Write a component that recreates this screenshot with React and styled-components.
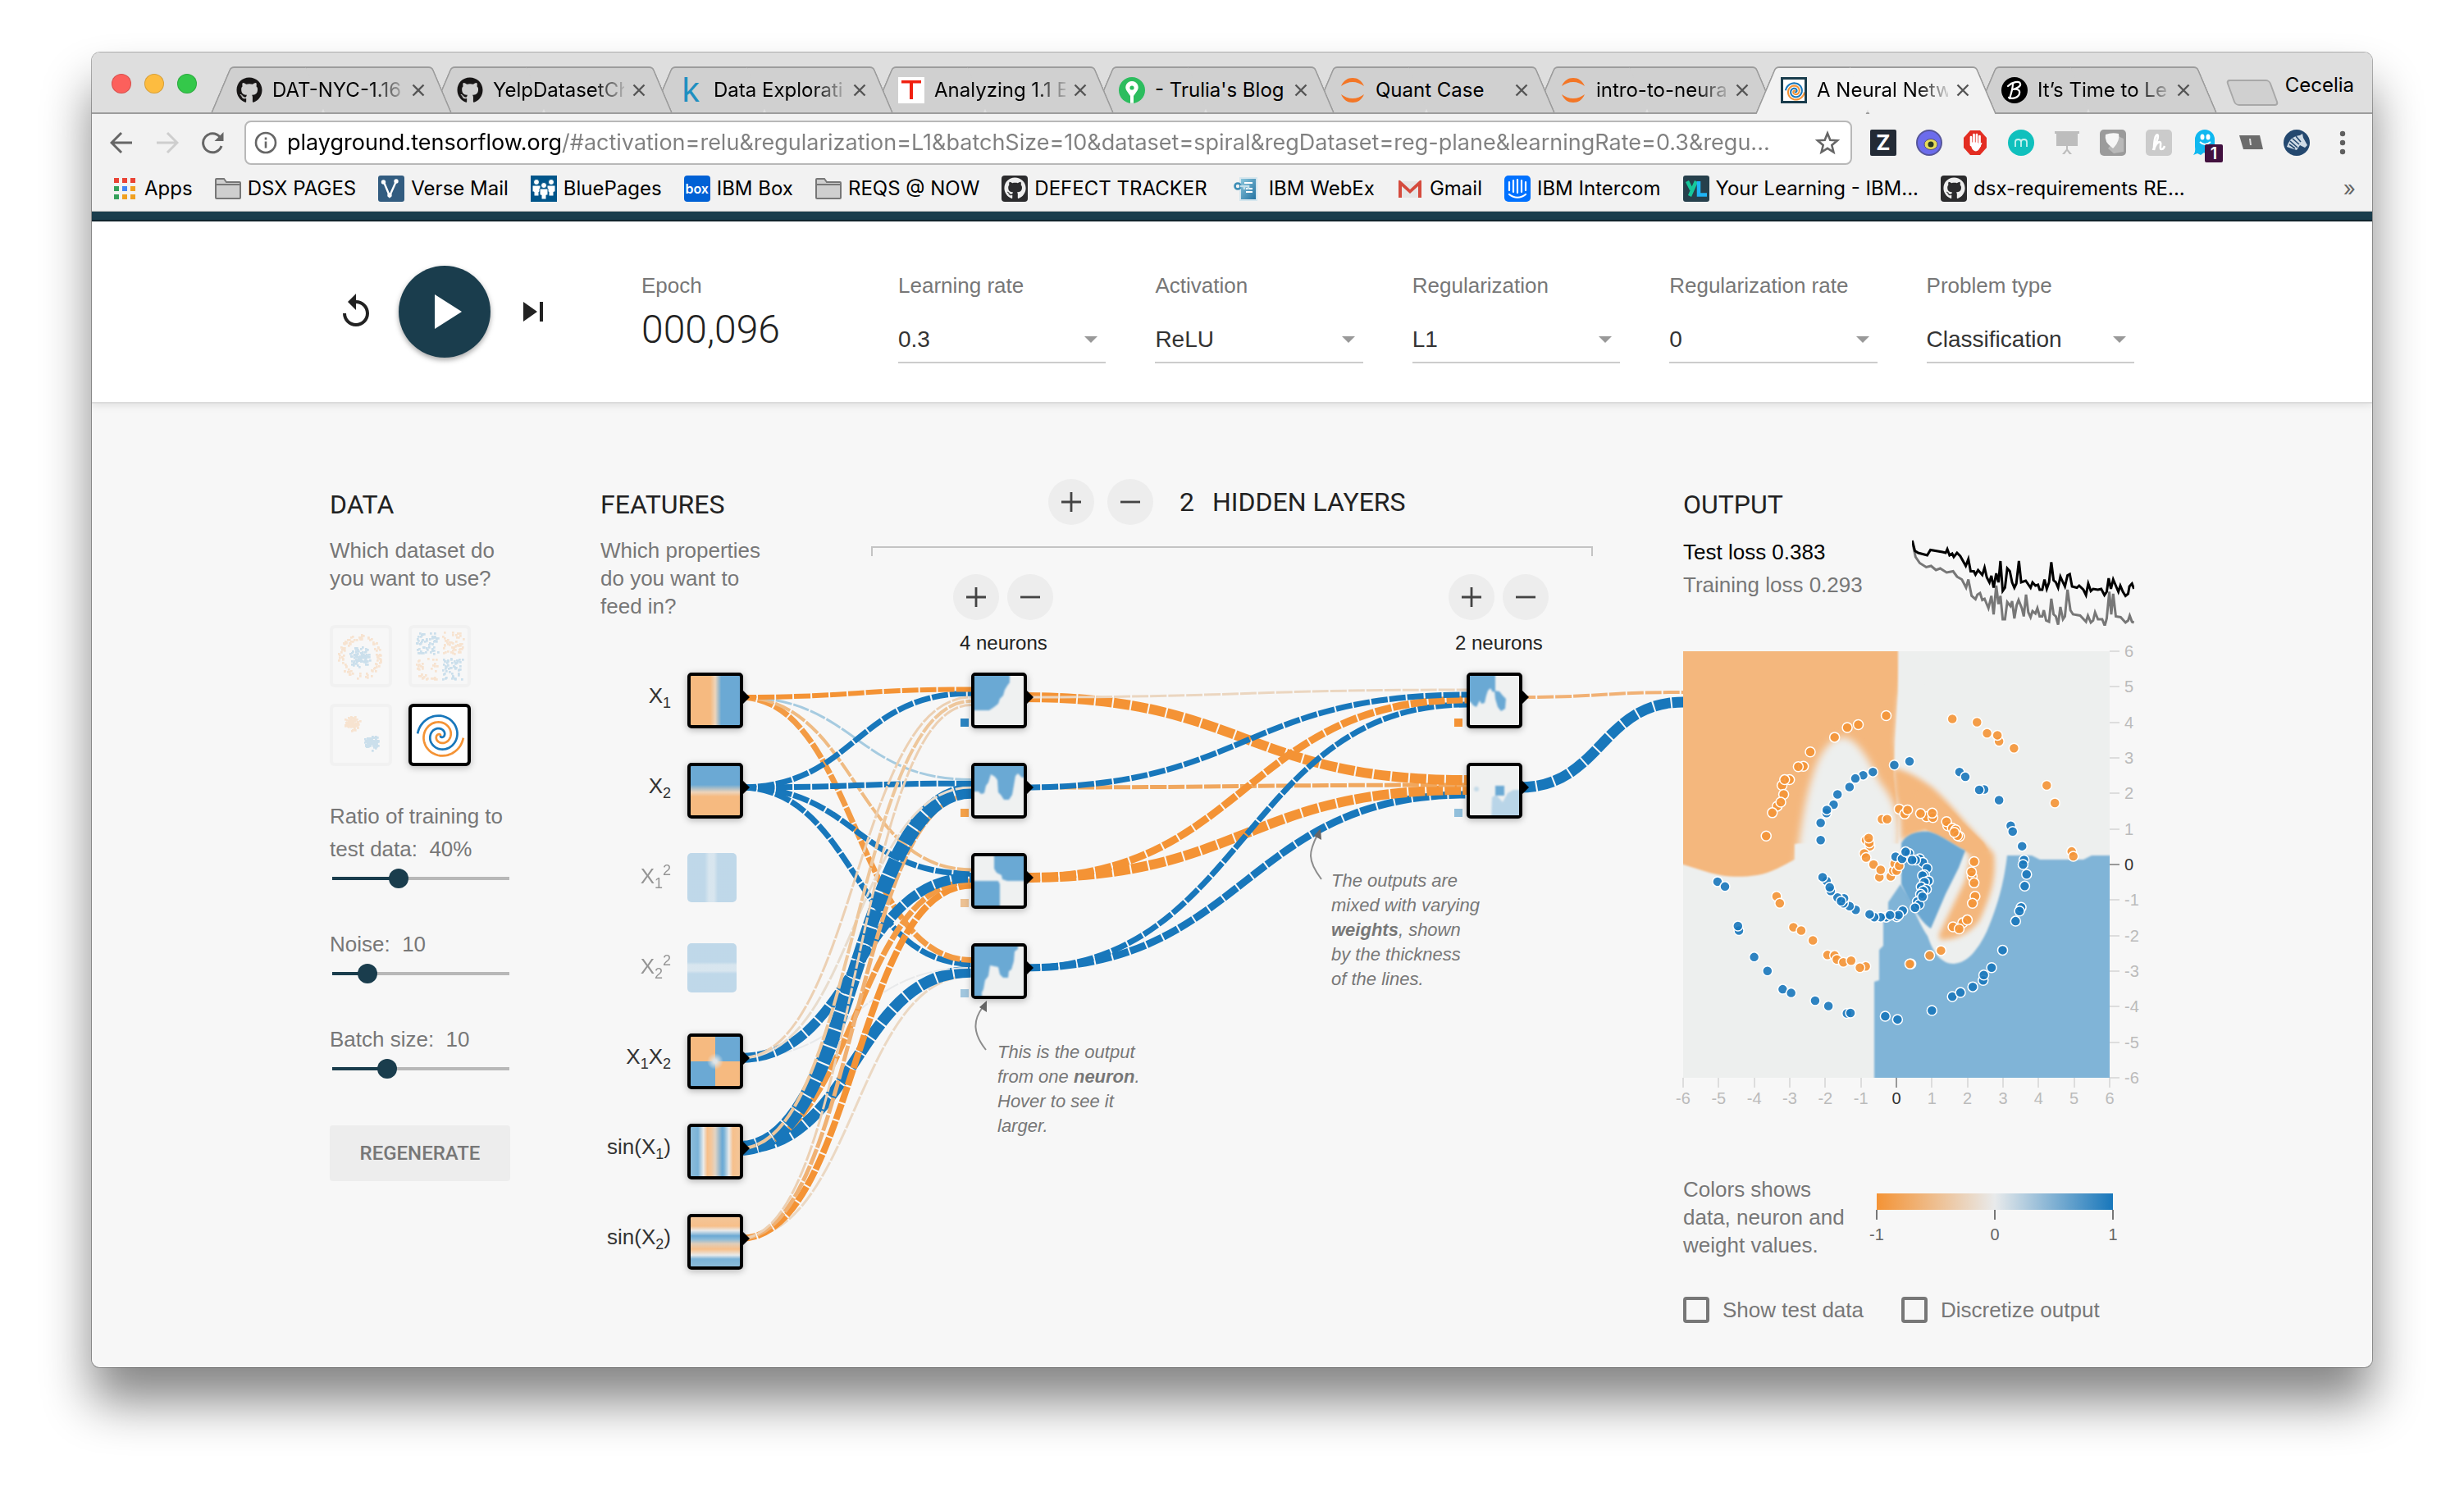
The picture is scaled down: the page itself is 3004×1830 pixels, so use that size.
import React from "react";
import styled, { createGlobalStyle, css } from "styled-components";
import { FaGithub } from "react-icons/fa";

const UI = `Inter, "Liberation Sans", sans-serif`;
const BODY = `"Liberation Sans", Arial, sans-serif`;
const HEAD = `Roboto, "Liberation Sans", sans-serif`;
const ORANGE = "#f49335";
const BLUE = "#1877bb";
const NAVY = "#1a3d4d";

const Global = createGlobalStyle`
  * { box-sizing: border-box; }
  body { margin: 0; background: #fff; font-family: ${BODY}; color: #222; }
  button, input, select { font: inherit; color: inherit; margin: 0; }
  button { border: 0; padding: 0; background: none; cursor: pointer; }
  h1, h2, p, ul { margin: 0; padding: 0; font-weight: 400; }
  svg { display: block; flex: none; }
`;

/* ---------- window ---------- */

const Desk = styled.div`
  padding: 64px 112px 160px;
`;
const Window = styled.div`
  border-radius: 10px;
  overflow: hidden;
  background: #f7f7f7;
`;
const Shade = styled.div`
  border-radius: 10px;
  box-shadow: 0 0 0 1px rgba(0, 0, 0, 0.3), 0 42px 60px rgba(0, 0, 0, 0.48);
`;

/* ---------- tab strip ---------- */

const TabStrip = styled.div`
  display: flex;
  align-items: flex-end;
  height: 75px;
  padding-left: 24px;
  background: #dedede;
  border-bottom: 2px solid #9c9c9c;
  font: 24px/32px ${UI};
  color: #000;
`;
const Lights = styled.div`
  display: flex;
  gap: 16px;
  padding-bottom: 23px;
  margin-right: 17px;
`;
const Light = styled.button`
  width: 24px;
  height: 24px;
  border-radius: 50%;
  background: ${(p) => p.$c};
  box-shadow: inset 0 0 0 1px rgba(0, 0, 0, 0.15);
`;
const slope = css`
  content: "";
  position: absolute;
  z-index: -1;
  top: 0;
  bottom: ${(p) => (p.$active ? "-2px" : "0")};
  background: ${(p) => (p.$active ? "#f2f2f2" : "#d0d0d0")};
  border-top: 2px solid #9c9c9c;
`;
const Tab = styled.div`
  position: relative;
  z-index: ${(p) => p.$z};
  isolation: isolate;
  display: flex;
  align-items: center;
  width: 294px;
  height: 56px;
  margin-right: -25px;
  padding: 2px 33px 0 31px;
  gap: 10px;
  &::before {
    ${slope}
    left: 12px;
    right: 50%;
    border-left: 2px solid #9c9c9c;
    border-top-left-radius: 5px;
    transform: skewX(-23deg);
  }
  &::after {
    ${slope}
    left: calc(50% - 20px);
    right: 12px;
    border-right: 2px solid #9c9c9c;
    border-top-right-radius: 5px;
    transform: skewX(23deg);
  }
`;
const TabTitle = styled.span`
  flex: 1;
  min-width: 0;
  padding-left: 2px;
  white-space: nowrap;
  ${(p) => p.$fade && "mask-image: linear-gradient(90deg, #000 76%, transparent 104%);"}
`;
const NewTab = styled.button`
  width: 54px;
  height: 32px;
  margin: 0 0 8px 41px;
  background: #d0d0d0;
  border: 2px solid #a8a8a8;
  border-radius: 5px;
  transform: skewX(20deg);
`;
const Profile = styled.button`
  margin: 0 22px 17px auto;
`;

/* ---------- toolbar ---------- */

const Toolbar = styled.div`
  display: flex;
  align-items: center;
  height: 70px;
  padding: 0 20px 0 18px;
  background: #f2f2f2;
`;
const NavButton = styled.button`
  display: grid;
  place-items: center;
  width: 36px;
  height: 36px;
  margin-right: 20px;
  opacity: ${(p) => (p.disabled ? 0.25 : 1)};
`;
const UrlBox = styled.label`
  flex: 1;
  display: flex;
  align-items: center;
  height: 54px;
  padding: 0 12px 0 10px;
  gap: 12px;
  border: 2px solid #b8b8b8;
  border-radius: 8px;
  background: #fff;
`;
const UrlInput = styled.input`
  flex: 1;
  min-width: 0;
  border: 0;
  padding: 0;
  outline: 0;
  font: 27px/40px ${UI};
  color: transparent;
  background: linear-gradient(90deg, #000 336px, #808080 336px);
  background-clip: text;
  -webkit-background-clip: text;
`;
const Extensions = styled.div`
  display: flex;
  gap: 24px;
  margin-left: 22px;
`;
const ExtButton = styled.button`
  position: relative;
  width: 32px;
  height: 32px;
`;
const Badge = styled.span`
  position: absolute;
  left: 16px;
  top: 18px;
  width: 22px;
  height: 22px;
  background: #42113f;
  color: #fff;
  font: 600 20px/22px ${UI};
  border-radius: 2px;
`;
const IconTile = styled.span`
  display: grid;
  place-items: center;
  flex: none;
  width: ${(p) => p.$size || 32}px;
  height: ${(p) => p.$size || 32}px;
  overflow: hidden;
  border-radius: ${(p) => p.$r || 0}px;
  background: ${(p) => p.$bg || "none"};
  color: ${(p) => p.$fg || "#fff"};
  font: ${(p) => p.$font || `700 26px/32px ${UI}`};
`;
const Bookmarks = styled.nav`
  display: flex;
  align-items: center;
  height: 49px;
  padding: 0 20px 7px 24px;
  gap: 27px;
  background: #f2f2f2;
  border-bottom: 1px solid #c4c4c4;
`;
const Bookmark = styled.a`
  display: flex;
  align-items: center;
  gap: 8px;
  color: #000;
  font: 24px/32px ${UI};
  text-decoration: none;
  white-space: nowrap;
`;
const More = styled.button`
  margin-left: auto;
  font: 26px/32px ${UI};
  color: #666;
`;

/* ---------- page header ---------- */

const Accent = styled.div`
  height: 12px;
  background: ${NAVY};
  border-bottom: 2px solid #12262f;
`;
const Controls = styled.header`
  background: #fff;
  border-bottom: 2px solid #dcdcdc;
  box-shadow: 0 2px 10px rgba(0, 0, 0, 0.1);
`;
const ControlsInner = styled.div`
  display: flex;
  align-items: center;
  max-width: 2200px;
  height: 220px;
  margin: 0 auto;
`;
const Playback = styled.div`
  display: flex;
  align-items: center;
  width: 380px;
  padding-left: 8px;
`;
const RoundButton = styled.button`
  display: grid;
  place-items: center;
  width: 48px;
  height: 48px;
`;
const PlayButton = styled(RoundButton)`
  width: 112px;
  height: 112px;
  margin: 0 28px;
  border-radius: 50%;
  background: ${NAVY};
  box-shadow: 0 3px 6px rgba(0, 0, 0, 0.35);
`;
const Fields = styled.div`
  flex: 1;
  display: grid;
  grid-template-columns: 253px repeat(5, 1fr);
  column-gap: 60px;
  height: 112px;
  margin-top: 14px;
`;
const Field = styled.label`
  display: flex;
  flex-direction: column;
  justify-content: space-between;
  font-size: 26px;
  line-height: 34px;
  color: #777;
`;
const Epoch = styled.output`
  height: 74px;
  font: 300 48px/66px ${HEAD};
  color: #222;
`;
const SelectWrap = styled.span`
  display: flex;
  align-items: center;
  border-bottom: 2px solid #ccc;
  padding-right: 10px;
  height: 56px;
`;
const Select = styled.select`
  flex: 1;
  min-width: 0;
  appearance: none;
  border: 0;
  padding: 0;
  background: none;
  font: 28px/36px ${BODY};
  color: #333;
`;

/* ---------- main ---------- */

const Main = styled.main`
  display: grid;
  grid-template-columns: 220px minmax(0, 1fr) 550px;
  max-width: 2200px;
  margin: 0 auto;
  padding: 92px 0 54px;
`;
const Title = styled.h2`
  padding-top: 11px;
  font: 400 32px/40px ${HEAD};
  color: #222;
`;
const Blurb = styled.p`
  font-size: 26px;
  line-height: 34px;
  color: #777;
`;
const DataColumn = styled.section`
  display: flex;
  flex-direction: column;
  ${Blurb} { margin-top: 19px; }
`;
const Datasets = styled.div`
  display: grid;
  grid-template-columns: 76px 76px;
  gap: 20px;
  margin: 40px 0 41px;
`;
const DatasetButton = styled.button`
  height: 76px;
  border: 4px solid ${(p) => (p.$on ? "#000" : "#f1f1f1")};
  border-radius: 6px;
  background: ${(p) => (p.$on ? "#fff" : "#f7f7f7")};
  box-shadow: ${(p) => (p.$on ? "0 2px 8px rgba(0,0,0,.25)" : "none")};
`;
const SliderField = styled.label`
  display: block;
  margin-bottom: 48px;
  font-size: 26px;
  line-height: 40px;
  color: #777;
  white-space: pre-wrap;
`;
const Slider = styled.input`
  display: block;
  appearance: none;
  width: 240px;
  height: 24px;
  margin: 4px 0 0 -9px;
  background:
    linear-gradient(90deg, ${NAVY} ${(p) => p.$fill}%, #b8b8b8 ${(p) => p.$fill}%)
    center / 216px 4px no-repeat;
  &::-webkit-slider-thumb {
    appearance: none;
    width: 24px;
    height: 24px;
    border-radius: 50%;
    background: ${NAVY};
  }
`;
const Regenerate = styled.button`
  height: 68px;
  margin-top: 9px;
  border-radius: 4px;
  background: #ededed;
  font: 500 24px/68px ${HEAD};
  color: #777;
`;

const NetworkColumn = styled.section`
  padding-left: 110px;
`;
const NetworkHead = styled.div`
  display: grid;
  grid-template-columns: 220px minmax(0, 880px);
  column-gap: 110px;
  height: 236px;
  ${Blurb} { margin-top: 19px; }
`;
const LayersTitle = styled.div`
  display: flex;
  align-items: center;
  gap: 16px;
  padding-left: 216px;
  font: 32px/40px ${HEAD};
`;
const LayerCount = styled.span`
  margin: 0 6px 0 16px;
`;
const CircleButton = styled.button`
  display: grid;
  place-items: center;
  width: 56px;
  height: 56px;
  border-radius: 50%;
  background: #ededed;
`;
const Bracket = styled.div`
  height: 12px;
  margin: 26px 0 22px;
  border: 2px solid #c4c4c4;
  border-bottom: 0;
`;
const LayerControls = styled.div`
  display: flex;
  justify-content: space-between;
  padding: 0 54px 0 100px;
`;
const LayerControl = styled.div`
  display: grid;
  grid-template-columns: 56px 56px;
  gap: 14px 10px;
  font-size: 24px;
  line-height: 28px;
`;
const NeuronCount = styled.span`
  grid-column: 1 / 3;
  padding-left: 8px;
`;
const Diagram = styled.div`
  position: relative;
  height: 770px;
`;
const Links = styled.svg`
  position: absolute;
  left: 0;
  top: 0;
  overflow: visible;
`;
const Node = styled.button`
  position: absolute;
  left: ${(p) => p.$x}px;
  top: ${(p) => p.$y}px;
  width: ${(p) => (p.$off ? 60 : 68)}px;
  height: ${(p) => (p.$off ? 60 : 68)}px;
  border: ${(p) => (p.$off ? "0" : "4px solid #000")};
  border-radius: 5px;
  overflow: hidden;
  box-shadow: ${(p) => (p.$off ? "none" : "0 2px 8px rgba(0,0,0,.28)")};
  opacity: ${(p) => (p.$off ? 0.4 : 1)};
  background: ${(p) => p.$bg || "#eff1f1"};
`;
const FeatureLabel = styled.span`
  position: absolute;
  left: 0;
  top: ${(p) => p.$y}px;
  width: 86px;
  text-align: right;
  font-size: 26px;
  line-height: 56px;
  color: #333;
  opacity: ${(p) => (p.$off ? 0.5 : 1)};
  sub, sup { font-size: 18px; line-height: 0; }
`;
const Callout = styled.p`
  position: absolute;
  left: ${(p) => p.$x}px;
  top: ${(p) => p.$y}px;
  font-size: 22px;
  line-height: 30px;
  font-style: italic;
  color: #777;
  white-space: nowrap;
`;

const OutputColumn = styled.section`
  display: flex;
  flex-direction: column;
`;
const LossRow = styled.div`
  display: flex;
  justify-content: space-between;
  align-items: flex-start;
  height: 141px;
  margin-top: 18px;
  font-size: 26px;
  line-height: 40px;
`;
const Loss = styled.p`
  color: ${(p) => (p.$dim ? "#777" : "#000")};
`;
const Plot = styled.div`
  display: grid;
  grid-template-columns: 520px 1fr;
  grid-template-rows: 520px 40px;
  font-size: 20px;
  line-height: 20px;
  color: #bbb;
`;
const AxisRight = styled.div`
  display: flex;
  flex-direction: column;
  justify-content: space-between;
  margin: -10px 0;
`;
const AxisBottom = styled.div`
  display: flex;
  justify-content: space-between;
  margin: 0 -20px;
`;
const Tick = styled.span`
  display: flex;
  align-items: center;
  gap: 6px;
  ${(p) => p.$v && "flex-direction: column; width: 40px; gap: 3px;"}
  color: ${(p) => (p.$zero ? "#333" : "inherit")};
  &::before {
    content: "";
    width: ${(p) => (p.$v ? 2 : 12)}px;
    height: ${(p) => (p.$v ? 12 : 2)}px;
    background: ${(p) => (p.$zero ? "#999" : "#ddd")};
  }
`;
const Legend = styled.div`
  display: flex;
  gap: 20px;
  margin-top: 79px;
`;
const LegendText = styled(Blurb)`
  width: 216px;
`;
const Scale = styled.div`
  width: 288px;
  padding-top: 22px;
  font-size: 20px;
  line-height: 20px;
  color: #666;
`;
const ScaleBar = styled.div`
  height: 20px;
  background: linear-gradient(90deg, ${ORANGE}, #e8eaeb, ${BLUE});
`;
const ScaleTicks = styled(AxisBottom)`
  span::before { background: #777; }
  span { gap: 8px; }
`;
const Checks = styled.div`
  display: flex;
  gap: 46px;
  margin-top: 46px;
`;
const Check = styled.label`
  display: flex;
  align-items: center;
  gap: 16px;
  font-size: 26px;
  line-height: 32px;
  color: #777;
`;
const Box = styled.input`
  appearance: none;
  width: 32px;
  height: 32px;
  border: 4px solid #777;
  border-radius: 4px;
`;

/* ---------- small drawings ---------- */

const CloseIcon = () => (
  <svg width="16" height="16" viewBox="0 0 16 16" stroke="#555" strokeWidth="2.4">
    <path d="M1.5 1.5l13 13M14.5 1.5l-13 13" />
  </svg>
);
const Jupyter = () => (
  <svg width="32" height="32" viewBox="0 0 32 32" fill="#f37626">
    <path d="M2 11C5 4 10 1 16 1s11 3 14 10C26 8 21 6 16 6S6 8 2 11z" />
    <path d="M2 21c3 7 8 10 14 10s11-3 14-10c-4 3-9 5-14 5S6 24 2 21z" />
  </svg>
);
const Trulia = () => (
  <svg width="32" height="32" viewBox="0 0 32 32">
    <circle cx="16" cy="16" r="16" fill="#2cbd5e" />
    <path d="M16 5a7.500 7.500 0 0 0-6.500 11.500L14 23v8.800h4V23l4.500-6.500A7.500 7.500 0 0 0 16 5z" fill="#fff" />
    <circle cx="16" cy="13" r="2.600" fill="#2cbd5e" />
  </svg>
);
const TIcon = () => (
  <svg width="32" height="32" viewBox="0 0 32 32">
    <rect width="32" height="32" fill="#fff" />
    <path d="M4 4h24v3.500H18V27h-4V7.500H4z" fill="#f02010" />
  </svg>
);
const Bee = () => (
  <svg width="32" height="32" viewBox="0 0 32 32">
    <circle cx="16" cy="16" r="16" fill="#000" />
    <g fill="none" stroke="#fff" strokeWidth="2.200" strokeLinecap="round">
      <path d="M14 8c0 6-2 12-4 18" />
      <path d="M8 11c5-5 14-7 15-3 1 3-4 6-9 7 6-1 9 1 8 5-1 5-8 7-13 5" />
    </g>
  </svg>
);
const spiral = (turn) => {
  let d = "";
  for (let i = 0; i <= 90; i++) {
    const t = i / 90;
    const r = 28 * (1 - t);
    const a = Math.PI * (turn + 1.03 + 3.56 * t);
    d += `${i ? "L" : "M"}${(35 + r * Math.cos(a)).toFixed(1)} ${(35 + r * Math.sin(a)).toFixed(1)}`;
  }
  return d;
};
const SpiralArt = ({ size, w }) => (
  <svg width={size} height={size} viewBox="0 0 68 68" fill="none" strokeWidth={w}>
    <path d={spiral(0)} stroke={BLUE} />
    <path d={spiral(1)} stroke={ORANGE} />
  </svg>
);
const FolderIcon = () => (
  <svg width="32" height="32" viewBox="0 0 32 32" stroke="#777" strokeWidth="2">
    <path d="M1 5q0-1 1-1h9l3 4h16q1 0 1 1v18q0 1-1 1H2q-1 0-1-1z" fill="#cfcfcf" />
    <path d="M1 11h30" />
  </svg>
);
const AppsIcon = () => {
  const c = ["#ea4335", "#ea4335", "#ea4335", "#34a05a", "#4285f4", "#f0a020", "#34a05a", "#f0a020", "#f0a020"];
  return (
    <svg width="32" height="32" viewBox="0 0 32 32">
      {c.map((f, i) => (
        <rect key={i} x={3 + (i % 3) * 10} y={3 + Math.floor(i / 3) * 10} width="6" height="6" fill={f} />
      ))}
    </svg>
  );
};
const VerseIcon = () => (
  <svg width="32" height="32" viewBox="0 0 32 32">
    <rect width="32" height="32" rx="3" fill="#325c80" />
    <g stroke="#fff" strokeWidth="2.400" fill="#fff">
      <path d="M7 8l7 17L22 7" fill="none" />
      <circle cx="6.500" cy="8" r="1.500" /><circle cx="14" cy="24" r="1.500" /><circle cx="22" cy="7" r="1.500" />
    </g>
  </svg>
);
const PeopleIcon = () => (
  <svg width="32" height="32" viewBox="0 0 32 32" fill="#fff">
    <rect width="32" height="32" fill="#00558a" />
    {[7, 25, 16].map((x, i) => (
      <g key={x} transform={`translate(${x} ${i === 2 ? 4 : 0})`} stroke="#00558a" strokeWidth="1">
        <circle cx="0" cy="8" r="3.500" />
        <path d="M-5 12h10v8h-2v5h-6v-5h-2z" />
      </g>
    ))}
  </svg>
);
const WebexIcon = () => (
  <svg width="40" height="32" viewBox="0 0 40 32">
    <defs>
      <linearGradient id="webex" x1="0" y1="0" x2="1" y2="1">
        <stop offset="0" stopColor="#8ec9de" />
        <stop offset="1" stopColor="#1f6f9f" />
      </linearGradient>
    </defs>
    <rect x="13" y="3" width="20" height="27" fill="url(#webex)" stroke="#d5e6ee" strokeWidth="2" />
    <path d="M18 9h10M20 16h8M20 20h8" stroke="#fff" strokeWidth="2.200" />
    <circle cx="10" cy="13" r="3.500" fill="none" stroke="#3c8db5" strokeWidth="2.600" />
    <path d="M13 13h10v4M18 13v4" fill="none" stroke="#c3dfea" strokeWidth="2.600" />
  </svg>
);
const GmailIcon = () => (
  <svg width="32" height="32" viewBox="-1 0 32 32">
    <path d="M2 7h26v20H2z" fill="#e6e6e6" />
    <path d="M1 27V7q0-2 2-1l12 11L27 6q2-1 2 1v20h-4V13L15 22 5 13v14z" fill="#d54b3d" />
  </svg>
);
const IntercomIcon = () => (
  <svg width="32" height="32" viewBox="0 0 32 32" stroke="#fff" strokeWidth="2.200" strokeLinecap="round" fill="none">
    <rect width="32" height="32" rx="5" fill="#0071ff" stroke="none" />
    <path d="M6 8v10M11 6v14M16 5v16M21 6v14M26 8v10M6 23c6 5 14 5 20 0" />
  </svg>
);
const YLIcon = () => (
  <svg width="32" height="32" viewBox="0 0 32 32" fill="none" strokeWidth="4.500">
    <rect width="32" height="32" rx="3" fill="#26404c" />
    <path d="M5 7l5 10M16 7L8 25" stroke="#16c79a" />
    <path d="M19 7v16.500h10" stroke="#1fb4f5" />
  </svg>
);
const GithubTile = () => (
  <IconTile $bg="#2b2b2d" $r={4} $fg="#eee">
    <FaGithub size={27} />
  </IconTile>
);
const ArrowIcon = ({ flip }) => (
  <svg width="28" height="28" viewBox="0 0 28 28" fill="none" stroke="#666" strokeWidth="3">
    <path d={flip ? "M1 14h25M14 2l12 12-12 12" : "M27 14H2M14 2L2 14l12 12"} />
  </svg>
);
const ReloadIcon = () => (
  <svg width="30" height="30" viewBox="0 0 30 30">
    <path d="M25 19a11.500 11.500 0 1 1-2-11" fill="none" stroke="#666" strokeWidth="3" />
    <path d="M27.500 2v11h-11z" fill="#666" />
  </svg>
);
const InfoIcon = () => (
  <svg width="28" height="28" viewBox="0 0 28 28" stroke="#666" strokeWidth="2.600" fill="none">
    <circle cx="14" cy="14" r="12" />
    <path d="M14 12.500v8M14 7.500v3" />
  </svg>
);
const StarIcon = () => (
  <svg width="32" height="32" viewBox="0 0 32 32" stroke="#666" strokeWidth="2.600" fill="none">
    <path d="M16 4.500l3.300 8.200 8.700.6-6.700 5.700 2.100 8.500L16 22.900l-7.400 4.600 2.100-8.500L4 13.300l8.700-.6z" />
  </svg>
);
const EyeIcon = () => (
  <svg width="32" height="32" viewBox="0 0 32 32">
    <circle cx="16" cy="16" r="15" fill="#6c6cec" stroke="#56569a" strokeWidth="2" />
    <ellipse cx="18" cy="18" rx="8" ry="6.500" fill="#e6dc5a" stroke="#54507c" />
    <circle cx="18" cy="18" r="3.500" fill="#2b3a20" />
  </svg>
);
const StopIcon = () => (
  <svg width="32" height="32" viewBox="0 0 32 32">
    <path d="M10 1h12l8 9v12l-8 9H10l-8-9V10z" fill="#e32d22" />
    <g stroke="#fff" strokeWidth="2.700" strokeLinecap="round">
      <path d="M11 9v10M14.500 6v11M18 6v11M21.500 8v12" />
      <path d="M11 17q1 9 6 9 3 0 5-5l2-5-3 3-2-3h-8z" fill="#fff" strokeWidth="1" />
    </g>
  </svg>
);
const MIcon = () => (
  <svg width="32" height="32" viewBox="0 0 32 32">
    <circle cx="16" cy="16" r="16" fill="#10c0bd" />
    <path d="M9 21v-6q0-3 3.500-3t3.500 3v6m0-6q0-3 3.500-3t3.500 3v6" fill="none" stroke="#c8f2f0" strokeWidth="1.800" />
  </svg>
);
const BoardIcon = () => (
  <svg width="32" height="32" viewBox="0 0 32 32" fill="#bdbdbd">
    <path d="M1 2h30v3h-2v15H17v4l5 6h-3l-3-4-3 4h-3l5-6v-4H3V5H1z" />
  </svg>
);
const ShieldIcon = () => (
  <svg width="32" height="32" viewBox="0 0 32 32">
    <rect width="32" height="32" rx="5" fill="#9b9b9b" />
    <path d="M22 8l7 3v16l-12 2-7-6z" fill="#b9b9b9" />
    <path d="M7 6q8-3 16-1 2 8-6 17-1 1-2 0Q5 15 7 6z" fill="#f6f6f6" />
  </svg>
);
const HoneyIcon = () => (
  <svg width="32" height="32" viewBox="0 0 32 32">
    <rect width="32" height="32" rx="5" fill="#cbcbcb" />
    <path d="M9 25C11 18 17 10 14.500 6.500c-3-1-4.500 8-4.500 18.500 1-5 4-10 7-10s-1 9 2 9 3-2 4-4" fill="none" stroke="#fff" strokeWidth="2.600" />
  </svg>
);
const GhostIcon = () => (
  <svg width="32" height="32" viewBox="0 0 32 32">
    <path d="M4 12a12 12 0 0 1 24 0v18l-5-3-4 4-4-3-4 3-4-2-5 2q3-4 2-10z" fill="#10b8f0" />
    <g fill="#fff"><ellipse cx="13" cy="9" rx="2.500" ry="3.500" /><ellipse cx="20" cy="9" rx="2.500" ry="3.500" /></g>
    <path d="M10 15q6 6 13 0" fill="none" stroke="#fff" strokeWidth="2" />
  </svg>
);
const CardIcon = () => (
  <svg width="32" height="32" viewBox="0 0 32 32">
    <path d="M2 7h25l4 17H7z" fill="#6c6c6c" />
    <path d="M15 11l1 8" stroke="#ddd" strokeWidth="2" />
  </svg>
);
const ZebraIcon = () => (
  <svg width="32" height="32" viewBox="0 0 32 32">
    <circle cx="16" cy="16" r="16" fill="#24486f" />
    <path d="M4 21Q8 8 20 7l3-2 1 5 5 9-3 3-6-3-4 6z" fill="#cfdbe6" />
    <path d="M8 14l9 8M11 11l8 7M15 8l6 7M7 18l7 5" stroke="#24486f" strokeWidth="1.600" />
  </svg>
);
const DotsIcon = () => (
  <svg width="32" height="32" viewBox="-12 -1 32 32" fill="#5f5f5f">
    <circle cx="4" cy="4" r="3.200" /><circle cx="4" cy="15" r="3.200" /><circle cx="4" cy="26" r="3.200" />
  </svg>
);
const Material = ({ size, d, fill = "#222" }) => (
  <svg width={size} height={size} viewBox="0 0 24 24" fill={fill}>
    <path d={d} />
  </svg>
);
const PlusIcon = ({ minus }) => (
  <svg width="24" height="24" viewBox="0 0 24 24" stroke="#444" strokeWidth="2.800">
    <path d={minus ? "M0 12h24" : "M0 12h24M12 0v24"} />
  </svg>
);
const Caret = () => (
  <svg width="16" height="8" viewBox="0 0 16 8" fill="#999">
    <path d="M0 0h16L8 8z" />
  </svg>
);

/* ---------- dataset thumbnails ---------- */

const rng = (seed) => () => {
  seed = (seed * 16807) % 2147483647;
  return seed / 2147483647;
};
const scatter = (kind) => {
  const r = rng(kind.length * 971 + 13);
  const g = () => (r() + r() + r() - 1.5) / 1.5;
  const out = [];
  for (let i = 0; i < 200; i++) {
    const blue = i % 2 === 0;
    if (kind === "circle") {
      const a = r() * Math.PI * 2;
      const d = blue ? r() * 13 : 20 + r() * 7;
      out.push([32 + d * Math.cos(a), 34 + d * Math.sin(a), blue]);
    } else if (kind === "quadrants") {
      const x = r() < 0.5 ? 5 + r() * 26 : 37 + r() * 26;
      const y = r() < 0.5 ? 4 + r() * 26 : 36 + r() * 26;
      out.push([x, y, x < 34 === y < 34]);
    } else {
      const [cx, cy] = blue ? [46, 42] : [22, 19];
      out.push([cx + g() * 12, cy + g() * 11, blue]);
    }
  }
  return out;
};
const Scatter = ({ kind }) => (
  <svg width="68" height="68" viewBox="0 0 68 68">
    {scatter(kind).map(([x, y, b], i) => (
      <rect key={i} x={Math.round(x)} y={Math.round(y)} width="2.700" height="2.700" fill={b ? "#cbdfec" : "#f7e3d0"} />
    ))}
  </svg>
);

/* ---------- network ---------- */

const FO = "#f6ba80";
const FB = "#6ba9d4";
const FW = "#e9eaea";
const features = [
  { label: <>X<sub>1</sub></>, bg: `linear-gradient(90deg, ${FO} 40%, #edd4ba 50%, ${FB} 62%)` },
  { label: <>X<sub>2</sub></>, bg: `linear-gradient(180deg, ${FB} 38%, #edd4ba 53%, ${FO} 62%)` },
  { label: <>X<sub>1</sub><sup>2</sup></>, off: true, bg: `linear-gradient(90deg, ${FB} 35%, #a9cbe2 44%, #a9cbe2 54%, ${FB} 62%)` },
  { label: <>X<sub>2</sub><sup>2</sup></>, off: true, bg: `linear-gradient(180deg, ${FB} 38%, #a9cbe2 44%, #a9cbe2 56%, ${FB} 62%)` },
  {
    label: <>X<sub>1</sub>X<sub>2</sub></>,
    bg: `radial-gradient(circle at 50% 50%, #dfe3e4 2px, transparent 10px), conic-gradient(${FB} 89deg, ${FO} 91deg 179deg, ${FB} 181deg 269deg, ${FO} 271deg 359deg, ${FB})`,
  },
  { label: <>sin(X<sub>1</sub>)</>, bg: `linear-gradient(90deg, #8bbbd9, #7ab3d8 15%, ${FW} 26%, #f7bf8a 34%, #f3c79c 42%, #e0d3c4 50%, ${FB} 64%, #7ab3d8 68%, ${FW} 78%, #f6c08c 86%, #f3c699)` },
  { label: <>sin(X<sub>2</sub>)</>, bg: `linear-gradient(180deg, #f3c699, #f7bf8a 18%, ${FW} 27%, ${FB} 38%, #8bbbd9 45%, #e0cdb8 54%, #f7bf8a 65%, ${FW} 77%, #7ab3d8 85%, #8bbbd9)` },
];

const ROW = 110;
const hiddenArt = [
  ["M-5-5H43V8L40 12 37 17 35 24 31 28 29 34 24 38 18 42H-5z"],
  ["M-5-5H65V13L58 14 53 9 50 12 48 24 46 35 42 41 36 41 32 35 29 32 28 17 25 13 20 10 17 20 14 24 12 33 8 34 5 31-5 31z"],
  ["M24-5H65V30H40L34 28 33 23 27 20 24 15z", "M-5 30H29L31 34V65H-5z"],
  ["M-5-5H53V3L49 6 48 18 45 28 42 30 41 38 35 38 31 34 29 25 19 23 17 36 13 41 11 52 9 56 9 65H-5z"],
];
const outArt = [
  ["M-5-5H31V18L28 20 25 15 22 18 20 24 18 33 14 34 12 30 8 38 4 36 1 32-5 31z", "M30 18L36 19 40 24 44 28 43 40 38 43 34 38 31 28z"],
  [],
];

// source index, target index, colour, width
const layer1 = [
  [0, 0, ORANGE, 6], [1, 0, BLUE, 7], [4, 0, "#ecd0b3", 3], [5, 0, "#eec79c", 4], [6, 0, "#ecd0b3", 3],
  [0, 1, "#a6cbe0", 3], [1, 1, BLUE, 7], [4, 1, "#e8dccd", 3], [5, 1, BLUE, 18], [6, 1, "#f0b173", 5],
  [0, 2, "#efbb83", 4], [1, 2, BLUE, 7], [4, 2, BLUE, 12], [5, 2, "#f39b44", 7], [6, 2, ORANGE, 8],
  [0, 3, "#f39b44", 7], [1, 3, BLUE, 7], [4, 3, "#e8e9ea", 2], [5, 3, BLUE, 14], [6, 3, "#ebd8c3", 3],
];
const layer2 = [
  [0, 0, "#ebd6c0", 3], [1, 0, BLUE, 7], [2, 0, ORANGE, 9], [3, 0, BLUE, 7],
  [0, 1, ORANGE, 12], [1, 1, "#f0a75e", 5], [2, 1, ORANGE, 12], [3, 1, BLUE, 9],
];
const layer3 = [[0, 0, "#f1b175", 4], [1, 0, BLUE, 13]];

const wire = (sx, dx, list) => {
  const per = {};
  list.forEach((l) => (per[l[1]] = (per[l[1]] || 0) + 1));
  const seen = {};
  return list
    .map(([s, t, c, w]) => {
      const n = per[t];
      const i = (seen[t] = seen[t] === undefined ? 0 : seen[t] + 1);
      const y0 = 30 + s * ROW;
      const y1 = 30 + t * ROW + ((i - (n - 1) / 2) / n) * 24;
      const m = (sx + dx) / 2;
      return { d: `M${sx} ${y0}C${m} ${y0} ${m} ${y1} ${dx} ${y1}`, c, w };
    })
    .reverse();
};
const wires = [...wire(1120, 1320, layer3), ...wire(516, 1056, layer2), ...wire(170, 452, layer1)];
const tips = [
  ...[0, 1, 4, 5, 6].map((r) => [174, r]),
  ...[0, 1, 2, 3].map((r) => [520, r]),
  ...[0, 1].map((r) => [1124, r]),
];
const biases = [
  [439, 0, "#2a83c0"], [439, 1, "#f3a048"], [439, 2, "#ecc193"], [439, 3, "#a1c6de"],
  [1041, 0, ORANGE], [1041, 1, "#92bfdb"],
];

const NeuronArt = ({ shapes, faint }) => (
  <svg width="60" height="60" viewBox="0 0 60 60">
    <defs>
      <filter id="soft" x="-20%" y="-20%" width="140%" height="140%">
        <feGaussianBlur stdDeviation="1" />
      </filter>
    </defs>
    <g filter="url(#soft)" fill={FB}>
      {shapes.map((d) => <path key={d} d={d} />)}
      {faint && (
        <>
          <path d="M26 65L27 38 32 35 40 44 46 33 53 29H65V65z" fill="#b9d5e8" />
          <rect x="31" y="24" width="11" height="12" />
          <circle cx="8" cy="28" r="3" fill="#c4dae8" />
        </>
      )}
    </g>
  </svg>
);

const Network = () => (
  <Diagram>
    <Links width="1320" height="770" viewBox="0 0 1320 770" fill="none">
      {wires.map((w, i) => (
        <path key={i} d={w.d} stroke={w.c} strokeWidth={w.w} strokeDasharray="20 2" />
      ))}
      {tips.map(([x, r]) => (
        <path key={`${x}-${r}`} d={`M${x} ${22 + r * ROW}l8 8-8 8z`} fill="#000" />
      ))}
      {biases.map(([x, r, c]) => (
        <rect key={`${x}-${r}`} x={x} y={56 + r * ROW} width="10" height="10" fill={c} />
      ))}
      <g stroke="#8c8c8c" strokeWidth="2">
        <path d="M879 252C861 228 864 218 874 198" />
        <path d="M470 460C454 440 454 424 466 408" />
      </g>
      <path d="M878 190l1 14-9-5zM471 400v14l-9-6z" fill="#666" />
    </Links>
    {features.map((f, i) => (
      <React.Fragment key={i}>
        <FeatureLabel $y={i * ROW} $off={f.off}>{f.label}</FeatureLabel>
        <Node aria-label={`feature ${i + 1}`} $x={106} $y={i * ROW} $off={f.off} $bg={f.bg} />
      </React.Fragment>
    ))}
    {hiddenArt.map((s, i) => (
      <Node key={i} aria-label={`neuron ${i + 1}`} $x={452} $y={i * ROW}>
        <NeuronArt shapes={s} />
      </Node>
    ))}
    {outArt.map((s, i) => (
      <Node key={i} aria-label={`neuron ${i + 5}`} $x={1056} $y={i * ROW}>
        <NeuronArt shapes={s} faint={i === 1} />
      </Node>
    ))}
    <Callout $x={891} $y={239}>
      The outputs are<br />mixed with varying<br /><b>weights</b>, shown<br />by the thickness<br />of the lines.
    </Callout>
    <Callout $x={484} $y={448}>
      This is the output<br />from one <b>neuron</b>.<br />Hover to see it<br />larger.
    </Callout>
  </Diagram>
);

/* ---------- output ---------- */

const testLoss =
  "762,160 770,185 780,190 808,196 818,183 855,188 865,190 870,181 877,196 885,192 890,200 900,190 910,198 920,212 927,222 935,205 942,235 952,235 957,243 965,232 978,244 985,226 992,250 1000,262 1006,246 1013,275 1021,240 1028,262 1034,210 1041,283 1048,275 1055,228 1063,235 1070,262 1077,275 1083,265 1091,210 1098,262 1112,258 1127,275 1133,262 1142,270 1150,268 1155,280 1163,280 1170,255 1177,278 1184,262 1191,213 1198,257 1205,262 1212,275 1219,248 1227,262 1233,272 1241,245 1248,242 1255,272 1270,275 1277,270 1290,280 1298,293 1305,265 1313,283 1320,278 1335,280 1345,278 1355,293 1362,285 1368,252 1375,278 1382,255 1390,270 1398,285 1404,270 1412,285 1420,295 1428,290 1432,272 1440,265 1446,278";
const trainLoss =
  "764,170 772,200 785,215 805,225 820,222 835,232 848,228 868,238 888,235 900,248 915,255 928,275 935,255 945,295 957,303 963,292 971,288 978,305 985,302 997,325 1006,295 1013,340 1021,270 1028,315 1034,295 1041,352 1048,352 1055,310 1065,320 1070,308 1077,350 1084,318 1090,305 1100,325 1106,345 1113,292 1120,335 1127,347 1133,332 1142,338 1148,325 1155,345 1163,345 1168,330 1175,355 1184,358 1191,302 1198,340 1205,345 1212,365 1219,322 1227,352 1233,345 1241,280 1250,330 1258,340 1280,343 1298,358 1304,343 1313,360 1320,355 1326,335 1335,352 1348,352 1356,368 1362,350 1370,285 1376,340 1382,290 1390,345 1405,347 1420,360 1428,355 1433,343 1440,358 1446,360";

const orangePts = [
  [682, 592], [596, 614], [562, 621], [523, 645], [448, 681], [427, 716], [411, 717], [384, 749], [361, 763], [369, 749], [366, 785], [346, 814], [357, 804], [331, 830], [312, 887],
  [886, 600], [962, 608], [993, 635], [1030, 655], [1025, 640], [1076, 672], [1177, 763], [1202, 806], [1254, 925], [1259, 937],
  [722, 821], [739, 833], [748, 823], [669, 846], [685, 846], [806, 840], [788, 832], [826, 842], [824, 831], [872, 862], [868, 852], [886, 868], [896, 872], [908, 888], [902, 886], [892, 878],
  [620, 897], [632, 912], [630, 904], [628, 892], [614, 930], [620, 940], [643, 957], [661, 988], [665, 970], [696, 986], [704, 972], [708, 955], [714, 972], [722, 960],
  [953, 950], [947, 986], [953, 1002], [945, 975], [956, 1035], [948, 1052], [918, 1100], [932, 1093], [888, 1110], [907, 1115], [851, 1168], [816, 1180], [758, 1201], [755, 1201],
  [344, 1035], [354, 1052], [396, 1111], [420, 1119], [456, 1143], [501, 1179], [523, 1180], [530, 1190], [550, 1197], [574, 1193], [619, 1207], [601, 1210],
];
const bluePts = [
  [707, 713], [754, 704], [641, 730], [611, 738], [587, 746], [569, 767], [532, 785], [520, 810], [498, 831], [499, 823], [480, 855], [480, 897],
  [908, 730], [926, 742], [984, 773], [969, 774], [1030, 799], [1066, 862], [1072, 876], [1101, 912], [1107, 946], [1104, 957], [1115, 981], [1109, 1010], [1098, 1062], [1093, 1071], [1081, 1096],
  [711, 938], [731, 943], [752, 930], [742, 926], [785, 943], [795, 952], [773, 946], [762, 946], [808, 966], [800, 982], [794, 984], [812, 997], [800, 1000], [790, 1012], [806, 1018], [796, 1022], [788, 1030], [778, 1048], [784, 1055], [771, 1063], [794, 1036],
  [733, 1070], [715, 1085], [720, 1081], [682, 1086], [665, 1086], [645, 1086], [694, 1081], [631, 1079], [588, 1068], [569, 1059], [550, 1052], [552, 1040], [532, 1038], [543, 1047], [511, 1022], [498, 997], [486, 988], [508, 1013],
  [162, 999], [185, 1011], [228, 1119], [225, 1108], [275, 1184], [316, 1218], [363, 1263], [389, 1272], [463, 1291], [504, 1304], [561, 1322], [572, 1321], [679, 1329], [717, 1337],
  [823, 1315], [886, 1281], [911, 1271], [949, 1257], [981, 1241], [983, 1228], [1007, 1210], [1041, 1167],
];
const px = (x) => ((x - 56) * 520) / 1315;
const py = (y) => ((y - 434) * 520) / 1046;
const Dots = ({ pts, fill }) =>
  pts.map(([x, y], i) => (
    <circle key={i} cx={px(x)} cy={py(y)} r="6" fill={fill} stroke="#fff" strokeWidth="1.500" fillOpacity=".9" />
  ));

const Heatmap = () => (
  <svg width="520" height="520" viewBox="0 0 520 520">
    <defs>
      <filter id="b1" x="-10%" y="-10%" width="120%" height="120%"><feGaussianBlur stdDeviation="1.300" /></filter>
      <filter id="b2" x="-20%" y="-20%" width="140%" height="140%"><feGaussianBlur stdDeviation="5" /></filter>
      <filter id="b3" x="-20%" y="-20%" width="140%" height="140%"><feGaussianBlur stdDeviation="3" /></filter>
    </defs>
    <rect width="520" height="520" fill="#edefee" />
    <path d="M-20-20H262V50L258 120 257 150 262 200V235H136V254C120 262 108 270 90 273 65 277 45 274 29 269L0 260-20 256z" fill="#f4b77d" filter="url(#b1)" />
    <path d="M275-20L262 60 258 110 261 142 290 150V60z" fill="#edefee" filter="url(#b3)" />
    <path d="M137 262C143 225 146 185 160 145 170 116 184 104 197 105 211 107 226 130 240 160 250 172 261 188 263 215V270H137z" fill="#edefee" filter="url(#b2)" />
    <path d="M139 280V235H264V280z" fill="#edefee" filter="url(#b1)" />
    <path d="M256 142C275 146 290 156 304 166 325 184 341 207 365 231L379 247C382 275 376 297 361 329 350 343 335 352 313 352L312 345 323 322 343 281 350 252 346 244 315 228 295 218 266 231 264 197 258 172z" fill="#f4b77d" filter="url(#b3)" />
    <path d="M285 170C305 172 325 190 341 209L366 233 372 244 350 246 318 228 295 216 275 220 272 190z" fill="#f4b77d" filter="url(#b1)" />
    <path d="M233 540V403L239 401V364L244 359V324L250 318V306L265 284 275 300C285 325 292 338 298 347 305 368 315 381 330 381 348 380 360 362 370 342 386 305 392 275 395 249H425L435 254H488L498 249H540V540z" fill="#80b4d7" filter="url(#b1)" />
    <path d="M266 284V234C272 223 285 219 300 220 315 224 330 236 344 243L336 264 320 296 302 338C292 332 278 312 266 284z" fill="#6ca8d2" filter="url(#b1)" />
    <Dots pts={orangePts} fill={ORANGE} />
    <Dots pts={bluePts} fill={BLUE} />
  </svg>
);

const ticks = [-6, -5, -4, -3, -2, -1, 0, 1, 2, 3, 4, 5, 6];

/* ---------- page data ---------- */

const tabs = [
  { title: "DAT-NYC-1.16", icon: <FaGithub size={32} color="#181616" />, fade: true },
  { title: "YelpDatasetCh", icon: <FaGithub size={32} color="#181616" />, fade: true },
  { title: "Data Explorati", icon: <IconTile $fg="#1f8fc0" $font={`500 42px/32px ${BODY}`}>k</IconTile>, fade: true },
  { title: "Analyzing 1.1 E", icon: <TIcon />, fade: true },
  { title: "- Trulia's Blog", icon: <Trulia /> },
  { title: "Quant Case", icon: <Jupyter /> },
  { title: "intro-to-neura", icon: <Jupyter />, fade: true },
  {
    title: "A Neural Netw",
    icon: <IconTile $bg={NAVY}><IconTile $size={26} $bg="#fff"><SpiralArt size={28} w={5} /></IconTile></IconTile>,
    fade: true,
    active: true,
  },
  { title: "It’s Time to Le", icon: <Bee />, fade: true },
];
const bookmarks = [
  ["Apps", <AppsIcon />],
  ["DSX PAGES", <FolderIcon />],
  ["Verse Mail", <VerseIcon />],
  ["BluePages", <PeopleIcon />],
  ["IBM Box", <IconTile $bg="#0061d5" $r={4} $font={`600 16px/30px ${UI}`}>box</IconTile>],
  ["REQS @ NOW", <FolderIcon />],
  ["DEFECT TRACKER", <GithubTile />],
  ["IBM WebEx", <WebexIcon />],
  ["Gmail", <GmailIcon />],
  ["IBM Intercom", <IntercomIcon />],
  ["Your Learning - IBM...", <YLIcon />],
  ["dsx-requirements RE...", <GithubTile />],
];
const extensions = [
  <IconTile $bg="#232b36" $r={2}>Z</IconTile>,
  <EyeIcon />, <StopIcon />, <MIcon />, <BoardIcon />, <ShieldIcon />, <HoneyIcon />,
  <><GhostIcon /><Badge>1</Badge></>,
  <CardIcon />, <ZebraIcon />,
];
const selects = [
  ["Learning rate", "0.3"],
  ["Activation", "ReLU"],
  ["Regularization", "L1"],
  ["Regularization rate", "0"],
  ["Problem type", "Classification"],
];

const AddRemove = ({ what }) => (
  <>
    <CircleButton aria-label={`Add ${what}`}><PlusIcon /></CircleButton>
    <CircleButton aria-label={`Remove ${what}`}><PlusIcon minus /></CircleButton>
  </>
);

const Range = ({ label, min, max, value }) => (
  <SliderField>
    {label}
    <Slider type="range" min={min} max={max} defaultValue={value} $fill={((value - min) / (max - min)) * 100} />
  </SliderField>
);

export default function App() {
  return (
    <Desk>
      <Global />
      <Shade>
        <Window>
          <TabStrip>
            <Lights>
              <Light $c="#fc605c" aria-label="Close" />
              <Light $c="#fdbc40" aria-label="Minimise" />
              <Light $c="#34c84a" aria-label="Zoom" />
            </Lights>
            {tabs.map((t, i) => (
              <Tab key={t.title} $active={t.active} $z={t.active ? 20 : 10 - i}>
                {t.icon}
                <TabTitle $fade={t.fade}>{t.title}</TabTitle>
                <button aria-label="Close tab"><CloseIcon /></button>
              </Tab>
            ))}
            <NewTab aria-label="New tab" />
            <Profile>Cecelia</Profile>
          </TabStrip>
          <Toolbar>
            <NavButton aria-label="Back"><ArrowIcon /></NavButton>
            <NavButton aria-label="Forward" disabled><ArrowIcon flip /></NavButton>
            <NavButton aria-label="Reload"><ReloadIcon /></NavButton>
            <UrlBox>
              <InfoIcon />
              <UrlInput
                aria-label="Address"
                defaultValue="playground.tensorflow.org/#activation=relu&regularization=L1&batchSize=10&dataset=spiral&regDataset=reg-plane&learningRate=0.3&regu..."
              />
              <StarIcon />
            </UrlBox>
            <Extensions>
              {extensions.map((e, i) => <ExtButton key={i} aria-label={`Extension ${i + 1}`}>{e}</ExtButton>)}
              <ExtButton aria-label="Menu"><DotsIcon /></ExtButton>
            </Extensions>
          </Toolbar>
          <Bookmarks>
            {bookmarks.map(([name, icon]) => <Bookmark key={name} href="#">{icon}{name}</Bookmark>)}
            <More aria-label="More bookmarks">»</More>
          </Bookmarks>

          <Accent />
          <Controls>
            <ControlsInner>
              <Playback>
                <RoundButton aria-label="Reset">
                  <Material size={48} d="M12 5V1L7 6l5 5V7c3.310 0 6 2.690 6 6s-2.690 6-6 6-6-2.690-6-6H4c0 4.420 3.580 8 8 8s8-3.580 8-8-3.580-8-8-8z" />
                </RoundButton>
                <PlayButton aria-label="Run">
                  <Material size={72} fill="#fff" d="M8 5v14l11-7z" />
                </PlayButton>
                <RoundButton aria-label="Step">
                  <Material size={48} d="M6 18l8.500-6L6 6v12zM16 6v12h2V6h-2z" />
                </RoundButton>
              </Playback>
              <Fields>
                <Field>Epoch<Epoch>000,096</Epoch></Field>
                {selects.map(([label, value]) => (
                  <Field key={label}>
                    {label}
                    <SelectWrap>
                      <Select defaultValue={value}><option>{value}</option></Select>
                      <Caret />
                    </SelectWrap>
                  </Field>
                ))}
              </Fields>
            </ControlsInner>
          </Controls>

          <Main>
            <DataColumn>
              <Title>DATA</Title>
              <Blurb>Which dataset do<br />you want to use?</Blurb>
              <Datasets>
                <DatasetButton aria-label="Circle"><Scatter kind="circle" /></DatasetButton>
                <DatasetButton aria-label="Exclusive or"><Scatter kind="quadrants" /></DatasetButton>
                <DatasetButton aria-label="Gaussian"><Scatter kind="gauss" /></DatasetButton>
                <DatasetButton aria-label="Spiral" $on><SpiralArt size={68} w={2.7} /></DatasetButton>
              </Datasets>
              <Range label={"Ratio of training to\ntest data:  40%"} min={10} max={90} value={40} />
              <Range label="Noise:  10" min={0} max={50} value={10} />
              <Range label="Batch size:  10" min={1} max={30} value={10} />
              <Regenerate>REGENERATE</Regenerate>
            </DataColumn>

            <NetworkColumn>
              <NetworkHead>
                <div>
                  <Title>FEATURES</Title>
                  <Blurb>Which properties<br />do you want to<br />feed in?</Blurb>
                </div>
                <div>
                  <LayersTitle>
                    <AddRemove what="layer" />
                    <LayerCount>2</LayerCount>
                    <span>HIDDEN LAYERS</span>
                  </LayersTitle>
                  <Bracket />
                  <LayerControls>
                    <LayerControl><AddRemove what="neuron" /><NeuronCount>4 neurons</NeuronCount></LayerControl>
                    <LayerControl><AddRemove what="neuron" /><NeuronCount>2 neurons</NeuronCount></LayerControl>
                  </LayerControls>
                </div>
              </NetworkHead>
              <Network />
            </NetworkColumn>

            <OutputColumn>
              <Title>OUTPUT</Title>
              <LossRow>
                <div>
                  <Loss>Test loss 0.383</Loss>
                  <Loss $dim>Training loss 0.293</Loss>
                </div>
                <svg width="271" height="110" viewBox="761 148 686 220" preserveAspectRatio="none" fill="none" strokeWidth="3">
                  <polyline points={trainLoss} stroke="#777" vectorEffect="non-scaling-stroke" />
                  <polyline points={testLoss} stroke="#000" vectorEffect="non-scaling-stroke" />
                </svg>
              </LossRow>
              <Plot>
                <Heatmap />
                <AxisRight>
                  {[...ticks].reverse().map((t) => <Tick key={t} $zero={t === 0}>{t}</Tick>)}
                </AxisRight>
                <AxisBottom>
                  {ticks.map((t) => <Tick key={t} $v $zero={t === 0}>{t}</Tick>)}
                </AxisBottom>
              </Plot>
              <Legend>
                <LegendText>Colors shows<br />data, neuron and<br />weight values.</LegendText>
                <Scale>
                  <ScaleBar />
                  <ScaleTicks>
                    {[-1, 0, 1].map((t) => <Tick key={t} $v>{t}</Tick>)}
                  </ScaleTicks>
                </Scale>
              </Legend>
              <Checks>
                <Check><Box type="checkbox" />Show test data</Check>
                <Check><Box type="checkbox" />Discretize output</Check>
              </Checks>
            </OutputColumn>
          </Main>
        </Window>
      </Shade>
    </Desk>
  );
}
